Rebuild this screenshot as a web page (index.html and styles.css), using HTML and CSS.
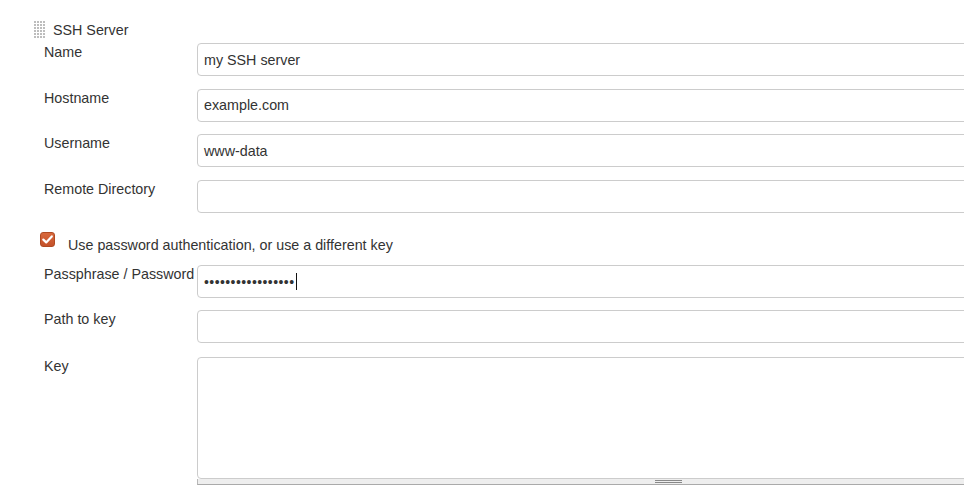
FILE: index.html
```html
<!DOCTYPE html>
<html>
<head>
<meta charset="utf-8">
<link rel="stylesheet" href="styles.css">
</head>
<body>
<div class="form">
  <div class="header">
    <span class="grip"></span>
    <span class="title">SSH Server</span>
  </div>
  <div class="rows">
    <div class="row">
      <label class="label">Name</label>
      <div class="field">my SSH server</div>
    </div>
    <div class="row">
      <label class="label">Hostname</label>
      <div class="field">example.com</div>
    </div>
    <div class="row">
      <label class="label">Username</label>
      <div class="field">www-data</div>
    </div>
    <div class="row">
      <label class="label">Remote Directory</label>
      <div class="field"></div>
    </div>
  </div>
  <div class="check-row">
    <span class="checkbox">
      <svg width="15" height="15" viewBox="0 0 15 15"><path d="M3.3 7.6 L6.2 10.4 L11.8 4.4" fill="none" stroke="#fff" stroke-width="2.2" stroke-linecap="round" stroke-linejoin="round"/></svg>
    </span>
    <span class="check-label">Use password authentication, or use a different key</span>
  </div>
  <div class="rows rows-b">
    <div class="row">
      <label class="label">Passphrase / Password</label>
      <div class="field"><span class="dots">•••••••••••••••••</span><span class="caret"></span></div>
    </div>
    <div class="row">
      <label class="label">Path to key</label>
      <div class="field"></div>
    </div>
    <div class="row row-key">
      <label class="label">Key</label>
      <div class="key-wrap">
        <div class="textarea"></div>
        <div class="resize-bar"><span class="resize-grip"></span></div>
      </div>
    </div>
  </div>
</div>
</body>
</html>
```
FILE: styles.css
```css
html, body {
  margin: 0;
  padding: 0;
  overflow: hidden;
  background: #fff;
}
body {
  font-family: "Liberation Sans", Arial, sans-serif;
  font-size: 14.3px;
  color: #333;
  width: 964px;
  height: 495px;
}
.form {
  padding-left: 44px;
  padding-top: 20px;
}
.header {
  display: flex;
  align-items: center;
  height: 20px;
  margin-left: -10px;
  margin-bottom: 3px;
}
.grip {
  width: 12px;
  height: 18px;
  margin-right: 7px;
  background-image:
    linear-gradient(to right, #bdbdbd 0 2px, transparent 2px 3px);
  background-size: 3px 3px;
  -webkit-mask-image: linear-gradient(to bottom, #000 0 2px, transparent 2px 3px);
  -webkit-mask-size: 3px 3px;
  mask-image: linear-gradient(to bottom, #000 0 2px, transparent 2px 3px);
  mask-size: 3px 3px;
}
.title {
  line-height: 20px;
}
.rows {
  display: flex;
  flex-direction: column;
  gap: 12.5px;
}
.row {
  display: grid;
  grid-template-columns: 153px 820px;
  align-items: start;
}
.label {
  line-height: 18px;
  white-space: nowrap;
}
.field {
  box-sizing: border-box;
  height: 33px;
  border: 1px solid #ccc;
  border-radius: 4px;
  padding-left: 6px;
  display: flex;
  align-items: center;
  color: #333;
  line-height: 18px;
  background: #fff;
}
.dots {
  letter-spacing: 0.42px;
  font-size: 14px;
}
.caret {
  display: inline-block;
  width: 1px;
  height: 17px;
  background: #111;
  margin-left: 2px;
}
.check-row {
  display: flex;
  align-items: flex-start;
  margin-top: 19.5px;
  margin-left: -4px;
  height: 23px;
}
.checkbox {
  box-sizing: border-box;
  width: 15px;
  height: 15px;
  border-radius: 3px;
  background: linear-gradient(#d8683c, #c4522a);
  border: 1px solid #b04a22;
  display: flex;
  align-items: center;
  justify-content: center;
  margin-right: 13px;
}
.checkbox svg {
  display: block;
  margin: -1px;
}
.check-label {
  line-height: 20px;
  margin-top: 3px;
}
.rows-b {
  margin-top: 10px;
  gap: 12px;
}
.row-key {
  margin-top: 2px;
}
.key-wrap {
  display: flex;
  flex-direction: column;
}
.textarea {
  box-sizing: border-box;
  height: 122px;
  border: 1px solid #ccc;
  border-radius: 4px;
  background: #fff;
}
.resize-bar {
  box-sizing: border-box;
  height: 6px;
  background: #eee;
  border-left: 1px solid #b8b8b8;
  border-bottom: 1px solid #aaa;
  padding-left: 457px;
  padding-top: 1px;
}
.resize-grip {
  display: block;
  width: 27px;
  height: 3px;
  box-sizing: border-box;
  border-top: 1px solid #888;
  border-bottom: 1px solid #888;
}
```
